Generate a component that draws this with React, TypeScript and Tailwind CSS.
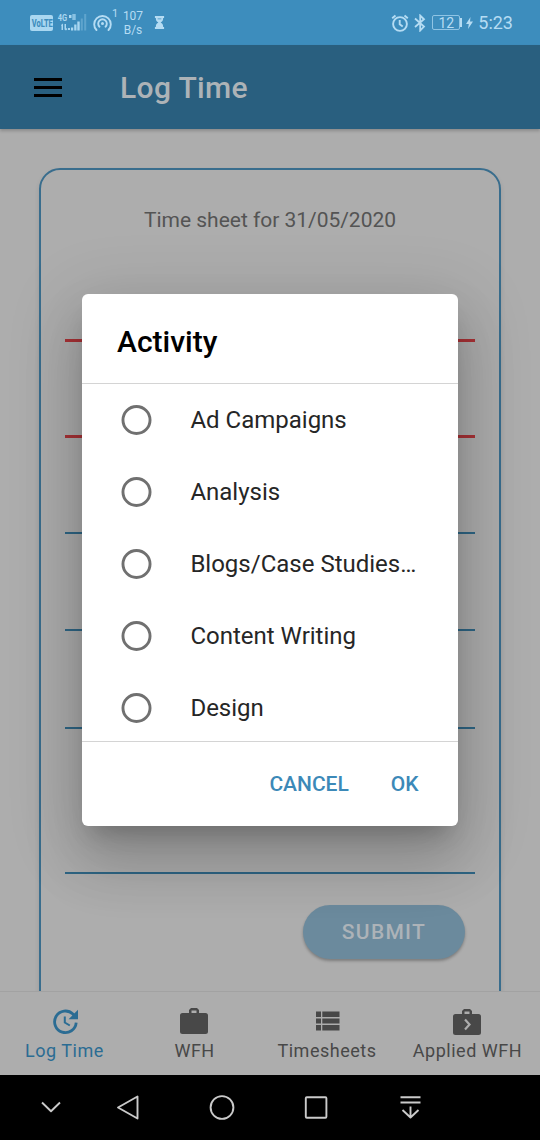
import React from "react";

const activities = ["Ad Campaigns", "Analysis", "Blogs/Case Studies…", "Content Writing", "Design"];

function StatusBar() {
  return (
    <div className="flex h-[45px] shrink-0 items-center bg-[#3d8dbd] pl-[30px] pr-[27px] text-[#b5dcf3]">
      <svg className="mt-px" width="23" height="16" viewBox="0 0 23 16">
        <rect width="23" height="16" rx="2" fill="#a9d7f1" />
        <text x="1.700" y="8.600" transform="scale(1 1.400)" fontFamily="Roboto" fontSize="7.500" fontWeight="800" fill="#3d8dbd">VoLTE</text>
      </svg>
      <svg className="ml-[4px]" width="31" height="24" viewBox="0 0 31 24" fill="#a9d7f1">
        <text x="0.800" y="7.700" transform="scale(1 1.300)" fontFamily="Roboto" fontSize="7.500" fontWeight="700">4G</text>
        <path d="M12 4h2.500v3H12zM15.500 3h1.200v6h-1.200zM17.300 3h1.200v6h-1.200zM4 14l2-1.500V19H4.500v-4zM7.500 13h1.500v4l1.500 1-1.500 1.500-1.500-1zM11 17h2v2h-2zM14 16.500h2.200v3H14zM17.200 13.500h2.300v6h-2.300zM20.300 10.500h2.400v9h-2.400z" />
        <path opacity=".32" d="M23.800 7.500h2v12h-2zM27.200 3h2v16.500h-2z" />
      </svg>
      <svg className="ml-[4px]" width="20" height="20" viewBox="0 0 20 20" fill="none" stroke="currentColor" strokeWidth="1.900" strokeLinecap="round">
        <path d="M4.500 17a8.300 8.300 0 1 1 12 0" />
        <path d="M7.500 13.700a4.300 4.300 0 1 1 6 0" />
        <circle cx="10.500" cy="10.500" r="1.500" fill="currentColor" stroke="none" />
      </svg>
      <span className="-mt-[18px] w-[6px] text-[11px] leading-none">1</span>
      <div className="ml-[4px] w-[22px] whitespace-nowrap text-center text-[12px] leading-[14px]">107<br />B/s</div>
      <svg className="ml-[10px]" width="11" height="13" viewBox="0 0 12 14" fill="currentColor">
        <path d="M1 0h10v2H1zM1 12h10v2H1zM2 2h8c0 3-1 4-2.800 5C9 8 10 9 10 12H2c0-3 1-4 2.800-5C3 6 2 5 2 2z" />
        <path d="M4 3h4" stroke="#3d8dbd" strokeWidth=".8" fill="none" />
      </svg>
      <svg className="ml-auto" width="18" height="18" viewBox="0 0 18 18" fill="none" stroke="currentColor" strokeWidth="1.900">
        <circle cx="9" cy="10" r="6.900" />
        <path d="M1.200 4.300 4.500 1.500M16.800 4.300 13.500 1.500M8.700 6v4.300l3 2.200" />
      </svg>
      <svg className="ml-[5px]" width="12" height="18" viewBox="0 0 12 18" fill="none" stroke="currentColor" strokeWidth="1.800">
        <path d="m1 4.500 9 8L6.200 16.500V1.500L10 5.300 1 13" />
      </svg>
      <div className="ml-[6px] flex h-[15px] w-[28px] items-center justify-center rounded-[2px] border border-[#8fc4e4] text-[14px] leading-none">12</div>
      <div className="h-[9px] w-[2px] bg-current" />
      <svg className="ml-[4px]" width="7" height="14" viewBox="0 0 7 14" fill="currentColor"><path d="M4.500 1 0 8h2.800L2 13l5-7.500H4z" /></svg>
      <span className="ml-[5px] mt-px text-[18px] leading-none">5:23</span>
    </div>
  );
}

function SheetCard() {
  return (
    <div className="flex h-[900px] flex-col rounded-[21px] border-2 border-[#396d8d] px-6 shadow-[0_3px_5px_rgba(0,0,0,0.10)]">
      <p className="mt-[36px] h-[29px] text-center text-[21px] leading-[29px] tracking-[-0.020px] text-[#545454]">Time sheet for 31/05/2020</p>
      <div className="h-[107px] border-b-[3px] border-[#a83236]" />
      <div className="h-[96px] border-b-[3px] border-[#a83236]" />
      <div className="h-[96px] border-b-2 border-[#2f6685]" />
      <div className="h-[97px] border-b-2 border-[#2f6685]" />
      <div className="h-[98px] border-b-2 border-[#2f6685]" />
      <div className="h-[145px] border-b-2 border-[#2f6685]" />
      <button className="mr-[10px] mt-[31.400px] h-[54px] w-[162px] self-end rounded-full bg-[#6b8a9d] pt-px text-[21px] font-medium tracking-[1.300px] text-[#adb3b8] shadow-[0_2px_3px_rgba(0,0,0,0.28)]">SUBMIT</button>
    </div>
  );
}

function UpdateIcon() {
  return (
    <svg width="30" height="30" viewBox="0 0 30 30" fill="none" stroke="currentColor" strokeWidth="2.800">
      <path d="M26.200 15.700a10.800 10.800 0 1 1-3.300-8.700l2 2" />
      <path d="M28 2.800v9.400H18.600z" fill="currentColor" stroke="none" />
      <path d="M14.800 9.500v6l5 3" strokeWidth="2" />
    </svg>
  );
}

function BriefcaseIcon({ arrow = false }: { arrow?: boolean }) {
  return (
    <svg width="30" height="30" viewBox="0 0 30 30" fill="currentColor">
      <path d="M10 7V4l2-2h6l2 2v3h6.500A2.500 2.500 0 0 1 29 9.500v16a2.500 2.500 0 0 1-2.500 2.500h-23A2.500 2.500 0 0 1 1 25.500v-16A2.500 2.500 0 0 1 3.500 7zm2.500 0h5V4.500h-5z" />
      {arrow && <path d="m13 12.500 4.500 5-4.500 5" fill="none" stroke="#adadad" strokeWidth="2.200" />}
    </svg>
  );
}

function TabBar() {
  return (
    <nav className="flex h-[84px] shrink-0 border-t border-[#a2a2a2] bg-[#adadad] text-[18px] text-[#484848]">
      <div className="flex w-[129px] flex-col items-center pt-[15px] text-[#2b6c93]">
        <UpdateIcon />
        <span className="leading-[28px] tracking-[0.520px]">Log Time</span>
      </div>
      <div className="flex w-[130px] flex-col items-center pt-[15px]">
        <div className="-mt-px mb-px h-[30px]"><BriefcaseIcon /></div>
        <span className="pl-px leading-[28px] tracking-[0.400px]">WFH</span>
      </div>
      <div className="flex w-[135px] flex-col items-center pt-[15px]">
        <svg width="30" height="30" viewBox="0 0 30 30" fill="currentColor">
          <path d="M4 4.500h5v5.500H4zm6.300 0h17.200v5.500H10.300zM4 11.500h5v5H4zm6.300 0h17.200v5H10.300zM4 18h5v5.500H4zm6.300 0h17.200v5.500H10.300z" />
        </svg>
        <span className="pl-px leading-[28px] tracking-[0.520px]">Timesheets</span>
      </div>
      <div className="flex w-[146px] flex-col items-center pt-[15px]">
        <BriefcaseIcon arrow />
        <span className="pl-px leading-[28px] tracking-[0.520px]">Applied WFH</span>
      </div>
    </nav>
  );
}

function SystemNav() {
  return (
    <div className="h-[65px] shrink-0 bg-black">
      <svg width="540" height="65" viewBox="0 0 540 65" fill="none" stroke="#cacaca" strokeWidth="1.900" strokeLinejoin="round">
        <path d="m42 27.500 9 8.700 9-8.700" />
        <path d="M137.500 21.500v22l-19.500-11z" />
        <circle cx="222" cy="32.500" r="11.400" />
        <rect x="305.800" y="22.200" width="20.600" height="20.600" rx="1" />
        <path d="M400.500 22.300h20M400.500 27.500h20M410.500 31.500v11M402.500 35l8 7.500 8-7.500" />
      </svg>
    </div>
  );
}

function ActivityDialog() {
  return (
    <div className="absolute left-[82.400px] top-[294px] flex h-[532.400px] w-[375.200px] flex-col rounded-[6px] bg-white shadow-[0_16px_22px_-10px_rgba(0,0,0,0.2),0_36px_57px_4px_rgba(0,0,0,0.14),0_14px_69px_12px_rgba(0,0,0,0.12)]">
      <h2 className="h-[89px] pl-[34.600px] pt-[30px] text-[30px] font-medium leading-[36px] text-black">Activity</h2>
      <div className="h-[359px] overflow-hidden border-y border-[#d4d4d4]">
        {activities.map((name) => (
          <div key={name} className="flex h-[72px] items-center pl-[39px]">
            <svg width="31" height="30" viewBox="0 0 31 30" fill="none" stroke="#707070" strokeWidth="2.900">
              <circle cx="15.500" cy="15" r="13.550" />
            </svg>
            <span className="ml-[38px] text-[24px] leading-[30px] text-[#262626]">{name}</span>
          </div>
        ))}
      </div>
      <div className="flex h-[84px] items-center justify-end pr-[39px] pt-px text-[21px] font-medium text-[#3c89b8]">
        <span>CANCEL</span>
        <span className="ml-[42px]">OK</span>
      </div>
    </div>
  );
}

export default function App() {
  return (
    <div className="relative flex h-[1140px] w-[540px] flex-col overflow-hidden bg-[#adadad] font-['Roboto',sans-serif]">
      <StatusBar />
      <header className="z-0 flex h-[84px] shrink-0 items-center bg-[#295f7f] pl-[34px] shadow-[0_2px_3px_rgba(0,0,0,0.2)]">
        <div className="flex w-[28px] flex-col gap-[5px]">
          <div className="h-[3px] bg-black" />
          <div className="h-[3px] bg-black" />
          <div className="h-[3px] bg-black" />
        </div>
        <h1 className="ml-[58px] pt-px text-[30px] font-medium leading-[36px] tracking-[0.350px] text-[#adb3b7]">Log Time</h1>
      </header>
      <main className="min-h-0 flex-1 overflow-hidden px-[39px] pt-[39px]">
        <SheetCard />
      </main>
      <TabBar />
      <SystemNav />
      <ActivityDialog />
    </div>
  );
}
